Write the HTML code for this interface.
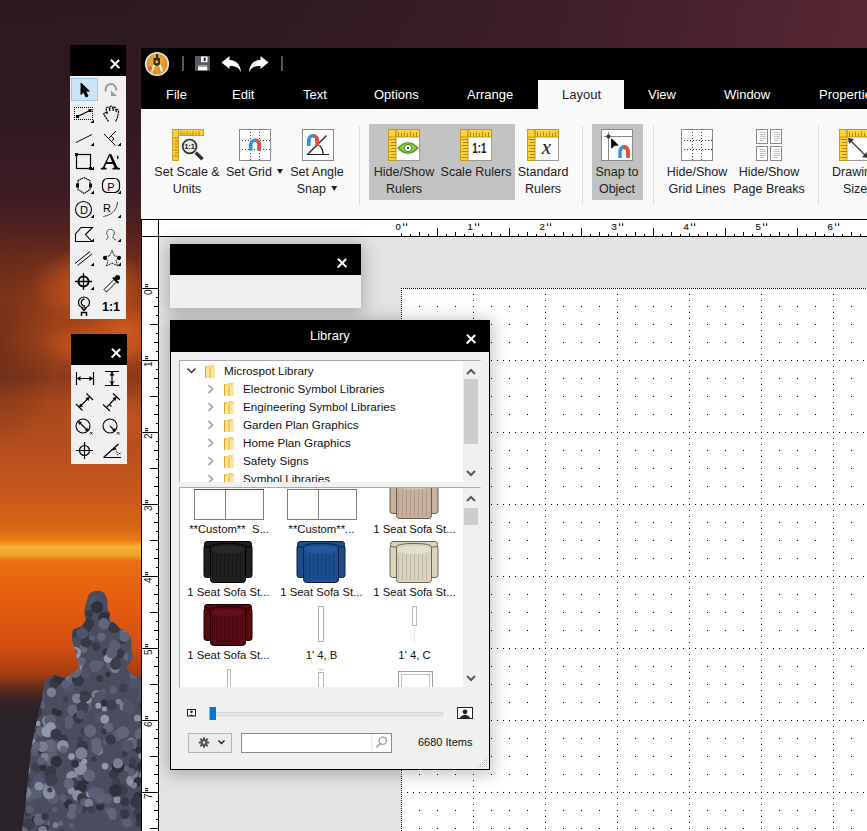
<!DOCTYPE html>
<html><head><meta charset="utf-8">
<style>
*{margin:0;padding:0;box-sizing:border-box}
html,body{width:867px;height:831px;overflow:hidden}
body{position:relative;font-family:"Liberation Sans",sans-serif;background:#2a1a22}
.a{position:absolute}
#sky{left:0;top:0;width:867px;height:831px;
background:linear-gradient(180deg,#2b1921 0px,#331b24 120px,#3f1d22 220px,#5a2418 290px,#8a3414 320px,#b84a18 345px,#8a3618 380px,#b04a1c 420px,#bf5620 470px,#c85a1c 505px,#e0640e 532px,#f2a426 545px,#ee7410 556px,#e85a0c 590px,#d24e0e 630px,#9a3610 670px,#5a2414 700px,#2e2024 730px,#2a2228 831px)}
.pal{background:#f0f0f0}
.hd{background:#000}
.x{position:absolute;width:10px;height:10px}
.x:before,.x:after{content:"";position:absolute;left:-0.5px;top:4.3px;width:12.4px;height:2.4px;background:#fff}
.x:before{transform:rotate(45deg)}.x:after{transform:rotate(-45deg)}
.menu{color:#fff;font-size:13px;top:86px;line-height:17px}
.rb{font-size:12.5px;color:#222;line-height:17px;text-align:center;white-space:nowrap}
.tr{font-size:11.7px;color:#111;line-height:14px;white-space:nowrap}
.it{font-size:11.3px;color:#111;line-height:14px;text-align:center;white-space:nowrap}
.sep{background:#dcdcdc;width:1px}
</style></head><body>
<svg class="a" style="left:0;top:0" width="867" height="831" viewBox="0 0 867 831">
 <defs>
  <linearGradient id="skyg" x1="0" y1="0" x2="0" y2="1">
   <stop offset="0" stop-color="#2c1920"/>
   <stop offset="0.15" stop-color="#321a22"/>
   <stop offset="0.24" stop-color="#3e1c24"/>
   <stop offset="0.28" stop-color="#56221f"/>
   <stop offset="0.32" stop-color="#74301a"/>
   <stop offset="0.36" stop-color="#983e18"/>
   <stop offset="0.41" stop-color="#a84618"/>
   <stop offset="0.455" stop-color="#8c3a1c"/>
   <stop offset="0.48" stop-color="#a4461c"/>
   <stop offset="0.54" stop-color="#b64e1e"/>
   <stop offset="0.60" stop-color="#ca5a1c"/>
   <stop offset="0.635" stop-color="#d86616"/>
   <stop offset="0.650" stop-color="#ec7a12"/>
   <stop offset="0.658" stop-color="#f4b232"/>
   <stop offset="0.668" stop-color="#eea228"/>
   <stop offset="0.675" stop-color="#ea7012"/>
   <stop offset="0.72" stop-color="#e65e10"/>
   <stop offset="0.78" stop-color="#d04e10"/>
   <stop offset="0.815" stop-color="#a03a12"/>
   <stop offset="0.835" stop-color="#6a2a16"/>
   <stop offset="0.86" stop-color="#30222a"/>
   <stop offset="1" stop-color="#28222a"/>
  </linearGradient>
  <linearGradient id="topg" x1="0" y1="0" x2="1" y2="0">
   <stop offset="0" stop-color="#2a1820" stop-opacity="0"/>
   <stop offset="1" stop-color="#6a2c3c" stop-opacity="0.7"/>
  </linearGradient>
  <radialGradient id="glow1" cx="0.5" cy="0.5" r="0.5"><stop offset="0" stop-color="#d45a20" stop-opacity="0.9"/><stop offset="1" stop-color="#d05a22" stop-opacity="0"/></radialGradient>
  <radialGradient id="snow" cx="0.4" cy="0.35" r="0.6"><stop offset="0" stop-color="#646878"/><stop offset="1" stop-color="#3e4050"/></radialGradient>
 </defs>
 <rect width="867" height="831" fill="url(#skyg)"/>
 <rect width="867" height="60" fill="url(#topg)"/>
 <linearGradient id="leftdark" x1="0" y1="0" x2="1" y2="0"><stop offset="0" stop-color="#2a1418" stop-opacity="0.45"/><stop offset="0.5" stop-color="#2a1418" stop-opacity="0"/></linearGradient>
 <radialGradient id="ld2" cx="0.5" cy="0.5" r="0.5"><stop offset="0" stop-color="#2a1418" stop-opacity="0.4"/><stop offset="1" stop-color="#2a1418" stop-opacity="0"/></radialGradient>
 <ellipse cx="0" cy="340" rx="60" ry="110" fill="url(#ld2)"/>
 <ellipse cx="90" cy="285" rx="60" ry="38" fill="url(#glow1)"/><ellipse cx="125" cy="330" rx="40" ry="30" fill="url(#glow1)"/>
 <ellipse cx="110" cy="420" rx="50" ry="30" fill="url(#glow1)"/>
 <ellipse cx="100" cy="345" rx="60" ry="25" fill="url(#glow1)"/>
 <linearGradient id="forg" x1="0" y1="0" x2="0" y2="1"><stop offset="0" stop-color="#2a2229" stop-opacity="0"/><stop offset="0.25" stop-color="#2a2229" stop-opacity="1"/></linearGradient><rect x="0" y="675" width="141" height="156" fill="url(#forg)"/>
 <clipPath id="treeclip"><path d="M96 591 Q103 590 106 596 L108 602 Q106 608 110 613 L109 620 Q116 623 119 628 L128 632 Q133 640 131 648 L133 656 Q130 664 126 668 L132 674 L141 678 L141 831 L22 831 L26 800 L31 750 L37 720 L42 700 L44 684 Q46 676 54 675 L64 678 L72 674 L80 668 L77 660 L75 650 L72 640 L73 630 L82 626 L86 620 L84 612 L86 604 L88 596 Q91 591 96 591z"/></clipPath>
 <path d="M96 591 Q103 590 106 596 L108 602 Q106 608 110 613 L109 620 Q116 623 119 628 L128 632 Q133 640 131 648 L133 656 Q130 664 126 668 L132 674 L141 678 L141 831 L22 831 L26 800 L31 750 L37 720 L42 700 L44 684 Q46 676 54 675 L64 678 L72 674 L80 668 L77 660 L75 650 L72 640 L73 630 L82 626 L86 620 L84 612 L86 604 L88 596 Q91 591 96 591z" fill="#4a4d5e"/>
 <g clip-path="url(#treeclip)"><circle cx="59.1" cy="625.3" r="5.1" fill="#3c3e4c"/><circle cx="30.0" cy="731.9" r="6.1" fill="#2e303c"/><circle cx="73.1" cy="605.3" r="2.9" fill="#62667a"/><circle cx="33.7" cy="643.1" r="5.0" fill="#9498ac"/><circle cx="92.4" cy="600.2" r="3.4" fill="#50536a"/><circle cx="54.8" cy="623.6" r="3.0" fill="#3c3e4c"/><circle cx="41.0" cy="731.7" r="5.1" fill="#62667a"/><circle cx="108.4" cy="727.4" r="5.0" fill="#62667a"/><circle cx="72.3" cy="665.6" r="4.8" fill="#5a5e72"/><circle cx="49.6" cy="632.4" r="5.6" fill="#363845"/><circle cx="84.7" cy="804.2" r="5.4" fill="#2e303c"/><circle cx="33.0" cy="691.3" r="5.5" fill="#363845"/><circle cx="71.6" cy="825.6" r="2.8" fill="#5a5e72"/><circle cx="61.2" cy="674.5" r="4.5" fill="#7a7e92"/><circle cx="124.7" cy="821.3" r="4.4" fill="#50536a"/><circle cx="110.9" cy="664.5" r="4.8" fill="#5a5e72"/><circle cx="54.1" cy="683.3" r="5.2" fill="#363845"/><circle cx="63.1" cy="738.9" r="4.5" fill="#363845"/><circle cx="34.4" cy="649.2" r="4.1" fill="#7a7e92"/><circle cx="39.1" cy="687.2" r="3.6" fill="#363845"/><circle cx="127.7" cy="656.8" r="4.2" fill="#5a5e72"/><circle cx="139.6" cy="625.3" r="3.2" fill="#2e303c"/><circle cx="19.5" cy="793.3" r="3.2" fill="#2e303c"/><circle cx="71.2" cy="679.2" r="4.8" fill="#9498ac"/><circle cx="127.1" cy="822.7" r="5.1" fill="#5a5e72"/><circle cx="132.2" cy="780.7" r="6.0" fill="#8a8ea2"/><circle cx="68.6" cy="685.3" r="4.4" fill="#50536a"/><circle cx="26.6" cy="639.6" r="3.1" fill="#2e303c"/><circle cx="31.0" cy="728.0" r="4.6" fill="#9498ac"/><circle cx="21.2" cy="804.0" r="5.0" fill="#363845"/><circle cx="139.3" cy="736.8" r="4.4" fill="#363845"/><circle cx="144.1" cy="703.1" r="4.4" fill="#2e303c"/><circle cx="113.2" cy="770.9" r="4.4" fill="#62667a"/><circle cx="20.9" cy="822.9" r="4.6" fill="#3c3e4c"/><circle cx="134.1" cy="775.3" r="3.7" fill="#50536a"/><circle cx="106.4" cy="652.5" r="4.0" fill="#2e303c"/><circle cx="85.6" cy="780.4" r="3.8" fill="#2e303c"/><circle cx="120.4" cy="790.1" r="5.5" fill="#3c3e4c"/><circle cx="80.6" cy="768.6" r="6.5" fill="#8a8ea2"/><circle cx="50.9" cy="759.1" r="6.3" fill="#62667a"/><circle cx="143.5" cy="823.9" r="4.0" fill="#2e303c"/><circle cx="77.7" cy="671.4" r="4.4" fill="#9498ac"/><circle cx="124.7" cy="706.4" r="5.1" fill="#7a7e92"/><circle cx="124.0" cy="617.6" r="4.1" fill="#50536a"/><circle cx="78.7" cy="632.1" r="5.7" fill="#3c3e4c"/><circle cx="68.3" cy="687.1" r="6.3" fill="#50536a"/><circle cx="144.1" cy="594.8" r="4.9" fill="#62667a"/><circle cx="36.6" cy="792.1" r="6.4" fill="#5a5e72"/><circle cx="37.8" cy="723.4" r="2.6" fill="#9498ac"/><circle cx="100.5" cy="718.1" r="6.2" fill="#50536a"/><circle cx="122.9" cy="640.1" r="3.5" fill="#2e303c"/><circle cx="115.0" cy="668.5" r="4.7" fill="#7a7e92"/><circle cx="133.6" cy="675.4" r="4.3" fill="#62667a"/><circle cx="71.4" cy="814.7" r="4.5" fill="#62667a"/><circle cx="82.8" cy="803.6" r="5.6" fill="#50536a"/><circle cx="39.9" cy="705.0" r="5.4" fill="#5a5e72"/><circle cx="104.7" cy="719.1" r="4.4" fill="#9498ac"/><circle cx="25.2" cy="635.3" r="2.7" fill="#363845"/><circle cx="89.3" cy="775.7" r="6.1" fill="#62667a"/><circle cx="141.6" cy="737.7" r="3.3" fill="#3c3e4c"/><circle cx="85.7" cy="706.1" r="6.3" fill="#5a5e72"/><circle cx="135.2" cy="808.5" r="3.3" fill="#5a5e72"/><circle cx="33.4" cy="697.2" r="2.8" fill="#2e303c"/><circle cx="45.0" cy="662.8" r="3.0" fill="#9498ac"/><circle cx="99.7" cy="678.4" r="3.5" fill="#363845"/><circle cx="45.9" cy="823.3" r="4.1" fill="#62667a"/><circle cx="123.7" cy="627.9" r="4.2" fill="#5a5e72"/><circle cx="71.5" cy="676.1" r="2.9" fill="#5a5e72"/><circle cx="88.4" cy="696.8" r="2.6" fill="#3c3e4c"/><circle cx="55.5" cy="825.3" r="3.0" fill="#7a7e92"/><circle cx="141.4" cy="613.9" r="3.6" fill="#2e303c"/><circle cx="52.3" cy="620.0" r="4.2" fill="#8a8ea2"/><circle cx="69.6" cy="720.5" r="4.6" fill="#5a5e72"/><circle cx="29.4" cy="602.2" r="5.3" fill="#50536a"/><circle cx="52.2" cy="592.2" r="2.9" fill="#3c3e4c"/><circle cx="126.7" cy="604.5" r="6.0" fill="#5a5e72"/><circle cx="144.3" cy="691.2" r="6.2" fill="#50536a"/><circle cx="84.9" cy="646.9" r="2.9" fill="#2e303c"/><circle cx="41.0" cy="818.3" r="5.0" fill="#50536a"/><circle cx="54.8" cy="711.5" r="3.2" fill="#2e303c"/><circle cx="144.3" cy="597.1" r="2.6" fill="#50536a"/><circle cx="83.3" cy="648.7" r="4.3" fill="#62667a"/><circle cx="72.9" cy="710.3" r="5.8" fill="#62667a"/><circle cx="57.1" cy="641.1" r="3.4" fill="#3c3e4c"/><circle cx="110.6" cy="622.5" r="6.5" fill="#7a7e92"/><circle cx="19.8" cy="742.5" r="6.0" fill="#50536a"/><circle cx="28.7" cy="795.8" r="6.0" fill="#5a5e72"/><circle cx="94.0" cy="759.1" r="2.7" fill="#363845"/><circle cx="74.6" cy="653.0" r="6.3" fill="#9498ac"/><circle cx="59.1" cy="596.5" r="6.0" fill="#2e303c"/><circle cx="18.1" cy="682.3" r="4.4" fill="#50536a"/><circle cx="49.5" cy="779.7" r="2.9" fill="#7a7e92"/><circle cx="68.7" cy="598.3" r="2.6" fill="#2e303c"/><circle cx="28.7" cy="824.5" r="5.9" fill="#3c3e4c"/><circle cx="117.6" cy="735.4" r="5.6" fill="#5a5e72"/><circle cx="37.0" cy="766.9" r="5.1" fill="#3c3e4c"/><circle cx="131.3" cy="743.0" r="5.4" fill="#7a7e92"/><circle cx="133.6" cy="774.0" r="4.8" fill="#7a7e92"/><circle cx="123.0" cy="732.3" r="6.1" fill="#62667a"/><circle cx="99.6" cy="609.0" r="2.7" fill="#50536a"/><circle cx="65.8" cy="699.5" r="2.7" fill="#3c3e4c"/><circle cx="104.4" cy="708.9" r="2.5" fill="#9498ac"/><circle cx="136.4" cy="809.8" r="2.9" fill="#62667a"/><circle cx="111.6" cy="650.3" r="2.8" fill="#3c3e4c"/><circle cx="114.1" cy="645.0" r="5.1" fill="#5a5e72"/><circle cx="27.7" cy="812.9" r="3.6" fill="#3c3e4c"/><circle cx="99.6" cy="607.1" r="3.1" fill="#3c3e4c"/><circle cx="106.0" cy="741.4" r="3.0" fill="#5a5e72"/><circle cx="52.1" cy="754.0" r="5.3" fill="#5a5e72"/><circle cx="108.0" cy="658.5" r="4.4" fill="#9498ac"/><circle cx="43.3" cy="829.6" r="6.2" fill="#363845"/><circle cx="27.7" cy="713.1" r="6.5" fill="#8a8ea2"/><circle cx="44.6" cy="821.6" r="3.3" fill="#50536a"/><circle cx="112.9" cy="652.7" r="3.9" fill="#62667a"/><circle cx="82.6" cy="807.1" r="5.3" fill="#363845"/><circle cx="68.0" cy="627.3" r="6.3" fill="#5a5e72"/><circle cx="56.3" cy="622.8" r="3.9" fill="#363845"/><circle cx="18.2" cy="773.4" r="5.9" fill="#2e303c"/><circle cx="108.6" cy="810.7" r="3.7" fill="#5a5e72"/><circle cx="67.6" cy="802.9" r="2.8" fill="#8a8ea2"/><circle cx="126.5" cy="657.3" r="2.7" fill="#62667a"/><circle cx="136.8" cy="649.6" r="3.6" fill="#50536a"/><circle cx="116.2" cy="781.9" r="4.2" fill="#3c3e4c"/><circle cx="68.8" cy="804.3" r="4.7" fill="#2e303c"/><circle cx="24.3" cy="768.9" r="4.3" fill="#9498ac"/><circle cx="128.4" cy="707.9" r="6.1" fill="#50536a"/><circle cx="78.0" cy="672.9" r="3.7" fill="#62667a"/><circle cx="51.0" cy="750.0" r="3.7" fill="#5a5e72"/><circle cx="33.2" cy="746.9" r="2.8" fill="#5a5e72"/><circle cx="87.9" cy="699.9" r="3.8" fill="#8a8ea2"/><circle cx="35.7" cy="635.5" r="2.9" fill="#2e303c"/><circle cx="58.5" cy="679.0" r="5.7" fill="#2e303c"/><circle cx="113.2" cy="690.0" r="4.2" fill="#5a5e72"/><circle cx="52.3" cy="773.8" r="4.5" fill="#5a5e72"/><circle cx="34.0" cy="712.3" r="5.0" fill="#7a7e92"/><circle cx="29.8" cy="809.5" r="4.0" fill="#5a5e72"/><circle cx="139.2" cy="797.6" r="6.0" fill="#2e303c"/><circle cx="72.0" cy="776.6" r="5.7" fill="#8a8ea2"/><circle cx="18.0" cy="684.7" r="6.2" fill="#8a8ea2"/><circle cx="141.5" cy="649.4" r="2.9" fill="#3c3e4c"/><circle cx="141.4" cy="614.9" r="5.8" fill="#5a5e72"/><circle cx="28.8" cy="779.9" r="2.5" fill="#3c3e4c"/><circle cx="134.8" cy="747.4" r="3.7" fill="#363845"/><circle cx="85.1" cy="696.0" r="5.6" fill="#363845"/><circle cx="84.6" cy="732.0" r="4.1" fill="#3c3e4c"/><circle cx="18.1" cy="720.8" r="6.5" fill="#363845"/><circle cx="99.9" cy="806.3" r="4.4" fill="#2e303c"/><circle cx="21.7" cy="689.7" r="5.1" fill="#2e303c"/><circle cx="81.3" cy="754.6" r="4.2" fill="#3c3e4c"/><circle cx="71.9" cy="679.4" r="4.5" fill="#62667a"/><circle cx="71.4" cy="756.6" r="3.3" fill="#9498ac"/><circle cx="125.3" cy="604.7" r="4.5" fill="#2e303c"/><circle cx="47.3" cy="642.7" r="5.5" fill="#3c3e4c"/><circle cx="81.0" cy="634.3" r="3.4" fill="#62667a"/><circle cx="25.2" cy="734.9" r="6.2" fill="#2e303c"/><circle cx="141.7" cy="623.1" r="2.7" fill="#363845"/><circle cx="75.1" cy="763.9" r="3.8" fill="#2e303c"/><circle cx="136.3" cy="669.3" r="3.2" fill="#9498ac"/><circle cx="77.4" cy="665.0" r="5.4" fill="#8a8ea2"/><circle cx="74.2" cy="614.9" r="2.8" fill="#363845"/><circle cx="139.4" cy="618.6" r="6.4" fill="#363845"/><circle cx="115.6" cy="664.2" r="5.7" fill="#3c3e4c"/><circle cx="78.1" cy="680.1" r="6.2" fill="#363845"/><circle cx="111.6" cy="705.2" r="5.0" fill="#3c3e4c"/><circle cx="115.4" cy="598.0" r="2.6" fill="#2e303c"/><circle cx="50.6" cy="772.6" r="6.1" fill="#363845"/><circle cx="60.5" cy="823.6" r="2.7" fill="#62667a"/><circle cx="58.2" cy="656.1" r="2.5" fill="#9498ac"/><circle cx="138.2" cy="604.1" r="5.8" fill="#3c3e4c"/><circle cx="139.5" cy="823.6" r="4.0" fill="#363845"/><circle cx="121.5" cy="620.8" r="4.5" fill="#3c3e4c"/><circle cx="56.5" cy="759.0" r="3.1" fill="#363845"/><circle cx="76.5" cy="781.6" r="4.9" fill="#5a5e72"/><circle cx="113.6" cy="649.1" r="2.8" fill="#3c3e4c"/><circle cx="87.2" cy="627.7" r="4.2" fill="#2e303c"/><circle cx="51.6" cy="608.8" r="2.9" fill="#62667a"/><circle cx="141.5" cy="630.8" r="3.0" fill="#62667a"/><circle cx="47.8" cy="721.0" r="5.6" fill="#8a8ea2"/><circle cx="55.3" cy="728.0" r="4.0" fill="#50536a"/><circle cx="73.8" cy="633.9" r="3.4" fill="#3c3e4c"/><circle cx="41.9" cy="604.0" r="3.5" fill="#3c3e4c"/><circle cx="47.4" cy="787.7" r="5.1" fill="#7a7e92"/><circle cx="18.6" cy="806.1" r="3.4" fill="#5a5e72"/><circle cx="23.1" cy="660.5" r="3.0" fill="#3c3e4c"/><circle cx="42.7" cy="606.6" r="4.6" fill="#3c3e4c"/><circle cx="51.0" cy="780.1" r="6.3" fill="#3c3e4c"/><circle cx="108.1" cy="674.4" r="2.6" fill="#2e303c"/><circle cx="43.9" cy="651.0" r="4.9" fill="#50536a"/><circle cx="121.5" cy="790.3" r="4.1" fill="#62667a"/><circle cx="57.6" cy="638.2" r="5.7" fill="#50536a"/><circle cx="69.8" cy="784.6" r="5.2" fill="#3c3e4c"/><circle cx="29.6" cy="628.4" r="5.3" fill="#5a5e72"/><circle cx="102.8" cy="691.2" r="2.7" fill="#5a5e72"/><circle cx="70.6" cy="592.5" r="5.6" fill="#9498ac"/><circle cx="43.0" cy="767.8" r="3.3" fill="#2e303c"/><circle cx="71.8" cy="790.6" r="4.1" fill="#8a8ea2"/><circle cx="116.2" cy="620.1" r="2.7" fill="#363845"/><circle cx="29.3" cy="741.7" r="4.0" fill="#50536a"/><circle cx="62.2" cy="628.0" r="3.2" fill="#363845"/><circle cx="80.3" cy="786.8" r="6.4" fill="#2e303c"/><circle cx="124.3" cy="598.7" r="6.2" fill="#3c3e4c"/><circle cx="135.6" cy="683.8" r="6.1" fill="#50536a"/><circle cx="99.3" cy="799.6" r="5.0" fill="#50536a"/><circle cx="123.3" cy="633.2" r="3.4" fill="#62667a"/><circle cx="37.9" cy="676.7" r="3.1" fill="#7a7e92"/><circle cx="23.2" cy="726.9" r="5.5" fill="#363845"/><circle cx="33.0" cy="736.1" r="4.7" fill="#5a5e72"/><circle cx="100.4" cy="664.1" r="3.5" fill="#5a5e72"/><circle cx="74.7" cy="696.3" r="2.6" fill="#5a5e72"/><circle cx="77.1" cy="698.4" r="5.0" fill="#7a7e92"/><circle cx="120.9" cy="686.9" r="2.8" fill="#5a5e72"/><circle cx="29.6" cy="697.2" r="4.5" fill="#3c3e4c"/><circle cx="34.5" cy="815.8" r="3.8" fill="#50536a"/><circle cx="24.9" cy="712.5" r="4.0" fill="#7a7e92"/><circle cx="21.3" cy="604.4" r="5.0" fill="#50536a"/><circle cx="42.6" cy="830.5" r="4.5" fill="#7a7e92"/><circle cx="105.1" cy="766.1" r="3.4" fill="#9498ac"/><circle cx="114.0" cy="627.2" r="6.1" fill="#363845"/><circle cx="36.2" cy="712.0" r="6.2" fill="#363845"/><circle cx="96.2" cy="646.6" r="4.0" fill="#363845"/><circle cx="38.5" cy="819.3" r="5.2" fill="#7a7e92"/><circle cx="118.6" cy="653.3" r="5.6" fill="#363845"/><circle cx="140.7" cy="699.9" r="4.6" fill="#50536a"/><circle cx="50.0" cy="720.3" r="5.9" fill="#5a5e72"/><circle cx="51.6" cy="832.7" r="4.8" fill="#50536a"/><circle cx="74.2" cy="631.7" r="5.5" fill="#3c3e4c"/><circle cx="50.2" cy="745.9" r="6.4" fill="#62667a"/><circle cx="131.8" cy="769.1" r="5.5" fill="#363845"/><circle cx="96.2" cy="694.8" r="4.6" fill="#7a7e92"/><circle cx="80.0" cy="739.3" r="2.7" fill="#3c3e4c"/><circle cx="63.1" cy="614.3" r="3.9" fill="#3c3e4c"/><circle cx="56.2" cy="621.0" r="4.0" fill="#7a7e92"/><circle cx="35.1" cy="819.3" r="3.5" fill="#2e303c"/><circle cx="26.1" cy="623.7" r="5.2" fill="#363845"/><circle cx="140.8" cy="601.9" r="5.8" fill="#9498ac"/><circle cx="100.0" cy="697.6" r="6.2" fill="#50536a"/><circle cx="39.0" cy="588.1" r="2.7" fill="#2e303c"/><circle cx="48.2" cy="602.4" r="5.6" fill="#3c3e4c"/><circle cx="101.4" cy="636.7" r="4.2" fill="#62667a"/><circle cx="82.4" cy="746.5" r="5.8" fill="#363845"/><circle cx="26.1" cy="742.6" r="6.5" fill="#5a5e72"/><circle cx="108.9" cy="589.6" r="5.9" fill="#5a5e72"/><circle cx="28.2" cy="749.9" r="3.2" fill="#8a8ea2"/><circle cx="47.5" cy="597.6" r="3.8" fill="#62667a"/><circle cx="137.7" cy="653.0" r="2.7" fill="#62667a"/><circle cx="73.4" cy="782.7" r="4.6" fill="#3c3e4c"/><circle cx="135.9" cy="808.9" r="2.8" fill="#50536a"/><circle cx="51.1" cy="646.3" r="5.5" fill="#9498ac"/><circle cx="134.2" cy="635.4" r="4.1" fill="#5a5e72"/><circle cx="133.3" cy="743.8" r="5.3" fill="#62667a"/><circle cx="77.6" cy="795.4" r="5.3" fill="#8a8ea2"/><circle cx="139.4" cy="645.8" r="6.0" fill="#8a8ea2"/><circle cx="97.1" cy="607.2" r="6.1" fill="#2e303c"/><circle cx="32.2" cy="741.6" r="3.1" fill="#9498ac"/><circle cx="21.6" cy="598.3" r="5.3" fill="#62667a"/><circle cx="26.6" cy="599.5" r="5.9" fill="#7a7e92"/><circle cx="121.8" cy="790.4" r="6.1" fill="#3c3e4c"/><circle cx="137.9" cy="614.5" r="3.3" fill="#2e303c"/><circle cx="138.6" cy="813.0" r="5.5" fill="#3c3e4c"/><circle cx="98.3" cy="705.8" r="3.0" fill="#9498ac"/><circle cx="44.0" cy="666.8" r="4.2" fill="#363845"/><circle cx="136.1" cy="600.0" r="5.5" fill="#9498ac"/><circle cx="82.0" cy="798.3" r="5.0" fill="#363845"/><circle cx="22.0" cy="716.1" r="2.9" fill="#50536a"/><circle cx="86.3" cy="641.5" r="5.9" fill="#363845"/><circle cx="39.6" cy="588.3" r="3.3" fill="#7a7e92"/><circle cx="18.6" cy="709.2" r="4.5" fill="#7a7e92"/><circle cx="140.8" cy="734.4" r="6.3" fill="#62667a"/><circle cx="137.9" cy="658.1" r="3.4" fill="#5a5e72"/><circle cx="39.1" cy="819.9" r="5.6" fill="#62667a"/><circle cx="89.3" cy="613.8" r="3.8" fill="#363845"/><circle cx="131.3" cy="772.1" r="4.2" fill="#5a5e72"/><circle cx="44.2" cy="653.0" r="6.1" fill="#5a5e72"/><circle cx="142.8" cy="743.8" r="6.3" fill="#3c3e4c"/><circle cx="113.8" cy="774.0" r="5.1" fill="#363845"/><circle cx="84.3" cy="802.4" r="4.3" fill="#5a5e72"/><circle cx="39.5" cy="696.4" r="5.6" fill="#50536a"/><circle cx="60.4" cy="746.7" r="5.3" fill="#5a5e72"/><circle cx="56.3" cy="761.7" r="5.9" fill="#2e303c"/><circle cx="141.8" cy="766.6" r="4.9" fill="#2e303c"/><circle cx="59.7" cy="634.8" r="6.4" fill="#50536a"/><circle cx="38.9" cy="750.5" r="3.3" fill="#2e303c"/><circle cx="119.0" cy="769.1" r="4.2" fill="#3c3e4c"/><circle cx="133.7" cy="657.4" r="6.0" fill="#50536a"/><circle cx="68.7" cy="783.4" r="5.3" fill="#62667a"/><circle cx="55.6" cy="593.5" r="3.5" fill="#50536a"/><circle cx="112.1" cy="812.3" r="4.2" fill="#62667a"/><circle cx="100.2" cy="797.0" r="5.2" fill="#62667a"/><circle cx="106.9" cy="798.6" r="5.2" fill="#5a5e72"/><circle cx="72.9" cy="652.2" r="5.3" fill="#7a7e92"/><circle cx="117.4" cy="764.1" r="5.0" fill="#363845"/><circle cx="79.3" cy="592.9" r="5.9" fill="#62667a"/><circle cx="136.1" cy="633.2" r="5.1" fill="#8a8ea2"/><circle cx="123.6" cy="812.3" r="2.9" fill="#2e303c"/><circle cx="38.4" cy="781.1" r="6.3" fill="#50536a"/><circle cx="125.6" cy="700.8" r="3.3" fill="#50536a"/><circle cx="99.2" cy="792.8" r="4.6" fill="#5a5e72"/><circle cx="44.7" cy="757.0" r="4.1" fill="#7a7e92"/><circle cx="110.6" cy="739.7" r="5.1" fill="#363845"/><circle cx="68.8" cy="591.3" r="4.2" fill="#62667a"/><circle cx="103.7" cy="731.3" r="2.9" fill="#363845"/><circle cx="137.4" cy="718.2" r="3.4" fill="#8a8ea2"/><circle cx="76.7" cy="628.6" r="6.2" fill="#3c3e4c"/><circle cx="42.5" cy="746.6" r="5.4" fill="#7a7e92"/><circle cx="62.8" cy="745.8" r="5.8" fill="#8a8ea2"/><circle cx="144.5" cy="775.7" r="5.1" fill="#8a8ea2"/><circle cx="63.1" cy="798.1" r="3.6" fill="#5a5e72"/><circle cx="142.8" cy="755.7" r="4.4" fill="#8a8ea2"/><circle cx="63.5" cy="749.6" r="3.8" fill="#62667a"/><circle cx="98.9" cy="750.8" r="3.9" fill="#8a8ea2"/><circle cx="25.2" cy="792.5" r="6.1" fill="#7a7e92"/><circle cx="85.4" cy="673.3" r="4.8" fill="#50536a"/><circle cx="138.9" cy="750.0" r="3.5" fill="#2e303c"/><circle cx="126.5" cy="633.9" r="4.3" fill="#7a7e92"/><circle cx="132.8" cy="783.5" r="3.2" fill="#9498ac"/><circle cx="142.1" cy="610.3" r="6.1" fill="#62667a"/><circle cx="124.5" cy="636.8" r="5.3" fill="#62667a"/><circle cx="124.6" cy="753.8" r="3.0" fill="#363845"/><circle cx="47.7" cy="622.4" r="4.5" fill="#363845"/><circle cx="133.0" cy="761.0" r="3.5" fill="#3c3e4c"/><circle cx="127.6" cy="589.6" r="5.9" fill="#62667a"/><circle cx="81.2" cy="661.3" r="4.4" fill="#62667a"/><circle cx="27.6" cy="745.3" r="5.0" fill="#3c3e4c"/><circle cx="23.8" cy="769.9" r="6.5" fill="#7a7e92"/><circle cx="82.8" cy="707.7" r="6.1" fill="#3c3e4c"/><circle cx="70.8" cy="619.3" r="2.9" fill="#5a5e72"/><circle cx="78.3" cy="717.8" r="5.6" fill="#363845"/><circle cx="61.4" cy="650.1" r="2.7" fill="#363845"/><circle cx="123.1" cy="687.7" r="4.5" fill="#3c3e4c"/><circle cx="61.8" cy="638.3" r="4.5" fill="#2e303c"/><circle cx="58.3" cy="661.9" r="4.8" fill="#50536a"/><circle cx="68.7" cy="724.9" r="4.1" fill="#5a5e72"/><circle cx="56.2" cy="589.5" r="3.3" fill="#9498ac"/><circle cx="115.3" cy="602.9" r="4.5" fill="#5a5e72"/><circle cx="96.3" cy="742.8" r="5.3" fill="#62667a"/><circle cx="28.5" cy="597.8" r="5.0" fill="#50536a"/><circle cx="30.9" cy="632.8" r="2.6" fill="#9498ac"/><circle cx="19.7" cy="803.4" r="3.1" fill="#3c3e4c"/><circle cx="50.8" cy="662.6" r="4.2" fill="#363845"/><circle cx="89.9" cy="730.8" r="6.2" fill="#62667a"/><circle cx="23.0" cy="617.4" r="5.7" fill="#5a5e72"/><circle cx="74.7" cy="591.5" r="4.0" fill="#62667a"/><circle cx="142.6" cy="705.4" r="4.1" fill="#3c3e4c"/><circle cx="78.0" cy="809.3" r="5.0" fill="#50536a"/><circle cx="104.8" cy="618.1" r="6.4" fill="#2e303c"/><circle cx="34.4" cy="592.4" r="5.4" fill="#3c3e4c"/><circle cx="112.5" cy="815.9" r="4.0" fill="#62667a"/><circle cx="126.6" cy="768.2" r="2.8" fill="#62667a"/><circle cx="81.3" cy="753.4" r="6.1" fill="#7a7e92"/><circle cx="109.1" cy="590.8" r="2.6" fill="#62667a"/><circle cx="28.1" cy="664.8" r="5.4" fill="#363845"/><circle cx="95.3" cy="666.1" r="6.3" fill="#5a5e72"/><circle cx="104.0" cy="623.8" r="5.7" fill="#62667a"/><circle cx="38.8" cy="786.1" r="4.4" fill="#8a8ea2"/><circle cx="138.0" cy="781.8" r="4.8" fill="#2e303c"/><circle cx="97.0" cy="748.8" r="5.7" fill="#62667a"/><circle cx="110.2" cy="591.8" r="3.1" fill="#9498ac"/><circle cx="72.4" cy="807.4" r="4.0" fill="#62667a"/><circle cx="116.0" cy="645.9" r="4.3" fill="#5a5e72"/><circle cx="51.4" cy="692.4" r="4.8" fill="#7a7e92"/><circle cx="54.6" cy="622.7" r="6.1" fill="#7a7e92"/><circle cx="52.8" cy="798.2" r="5.7" fill="#5a5e72"/><circle cx="62.1" cy="609.0" r="4.7" fill="#7a7e92"/><circle cx="118.0" cy="766.4" r="6.4" fill="#2e303c"/><circle cx="104.1" cy="702.9" r="3.3" fill="#2e303c"/><circle cx="118.5" cy="701.6" r="2.9" fill="#7a7e92"/><circle cx="47.6" cy="731.2" r="6.1" fill="#9498ac"/><circle cx="58.8" cy="713.0" r="3.3" fill="#2e303c"/><circle cx="40.9" cy="761.2" r="4.0" fill="#5a5e72"/><circle cx="117.0" cy="799.7" r="3.5" fill="#8a8ea2"/><circle cx="65.5" cy="614.2" r="5.0" fill="#7a7e92"/><circle cx="58.1" cy="595.5" r="3.6" fill="#50536a"/><circle cx="22.3" cy="832.6" r="6.0" fill="#62667a"/><circle cx="45.1" cy="816.6" r="3.6" fill="#363845"/><circle cx="115.4" cy="790.3" r="6.4" fill="#2e303c"/><circle cx="61.0" cy="833.7" r="4.0" fill="#2e303c"/><circle cx="88.8" cy="803.1" r="4.3" fill="#7a7e92"/><circle cx="127.6" cy="746.0" r="6.2" fill="#50536a"/><circle cx="50.7" cy="727.4" r="5.1" fill="#9498ac"/><circle cx="82.3" cy="633.1" r="5.9" fill="#50536a"/><circle cx="143.9" cy="642.8" r="2.7" fill="#363845"/><circle cx="25.5" cy="724.6" r="2.6" fill="#8a8ea2"/><circle cx="117.9" cy="763.3" r="5.1" fill="#7a7e92"/><circle cx="30.8" cy="666.5" r="2.5" fill="#3c3e4c"/><circle cx="55.9" cy="734.1" r="5.5" fill="#363845"/><circle cx="65.2" cy="684.3" r="4.0" fill="#5a5e72"/><circle cx="48.3" cy="623.4" r="5.2" fill="#3c3e4c"/><circle cx="133.9" cy="785.3" r="3.1" fill="#7a7e92"/><circle cx="136.6" cy="802.1" r="6.1" fill="#363845"/><circle cx="139.7" cy="816.7" r="4.0" fill="#2e303c"/><circle cx="75.4" cy="671.9" r="5.8" fill="#62667a"/><circle cx="64.5" cy="670.0" r="5.4" fill="#363845"/><circle cx="88.3" cy="623.7" r="6.0" fill="#363845"/><circle cx="49.3" cy="594.3" r="4.8" fill="#2e303c"/><circle cx="51.1" cy="615.0" r="4.3" fill="#50536a"/><circle cx="142.3" cy="602.0" r="6.1" fill="#50536a"/><circle cx="89.1" cy="794.3" r="3.0" fill="#8a8ea2"/><circle cx="72.9" cy="652.6" r="3.5" fill="#363845"/><circle cx="54.8" cy="809.4" r="2.7" fill="#5a5e72"/><circle cx="36.3" cy="746.0" r="4.3" fill="#62667a"/><circle cx="35.8" cy="588.5" r="5.8" fill="#50536a"/><circle cx="63.7" cy="598.0" r="4.1" fill="#2e303c"/><circle cx="35.5" cy="632.5" r="5.6" fill="#50536a"/><circle cx="94.3" cy="792.8" r="6.1" fill="#5a5e72"/><circle cx="40.3" cy="621.8" r="5.2" fill="#50536a"/><circle cx="92.0" cy="638.0" r="2.8" fill="#5a5e72"/><circle cx="124.8" cy="814.3" r="4.6" fill="#363845"/><circle cx="124.9" cy="801.5" r="4.5" fill="#363845"/><circle cx="34.9" cy="752.4" r="3.5" fill="#5a5e72"/><circle cx="22.7" cy="761.5" r="4.8" fill="#8a8ea2"/><circle cx="84.0" cy="698.1" r="4.6" fill="#3c3e4c"/><circle cx="49.1" cy="793.0" r="6.2" fill="#8a8ea2"/><circle cx="91.2" cy="809.8" r="3.7" fill="#3c3e4c"/><circle cx="80.8" cy="714.8" r="4.6" fill="#50536a"/><circle cx="48.9" cy="609.9" r="5.0" fill="#363845"/><circle cx="49.8" cy="789.8" r="2.6" fill="#3c3e4c"/><circle cx="111.8" cy="652.6" r="5.8" fill="#5a5e72"/><circle cx="84.4" cy="761.6" r="2.9" fill="#9498ac"/><circle cx="40.7" cy="655.4" r="4.4" fill="#5a5e72"/><circle cx="32.0" cy="618.0" r="6.0" fill="#50536a"/></g>
 </svg>

<!-- toolbox palette 1 -->
<div class="a hd" style="left:70px;top:45px;width:56px;height:31px"><div class="x" style="left:39px;top:14px"></div></div>
<div class="a pal" style="left:70px;top:76px;width:56px;height:243px"></div>
<div class="a" style="left:71px;top:78px;width:27px;height:23px;background:#cce4f7;border:1px solid #99c9ef"></div>

<!-- palette 2 -->
<div class="a hd" style="left:71px;top:334px;width:56px;height:31px"><div class="x" style="left:39px;top:14px"></div></div>
<div class="a pal" style="left:71px;top:365px;width:56px;height:99px"></div>


<!-- toolbox icons -->
<svg class="a" style="left:70px;top:76px" width="57" height="390" viewBox="70 76 57 390" fill="none" stroke="#000" stroke-width="1">
 <defs><path id="tri" d="M0 0 h-3.5 l3.5 -3.5z" fill="#000" stroke="none"/></defs>
 <!-- row1 -->
 <path d="M81 83 V94.5 L83.5 92 L86 97 L88 96 L85.6 91.2 L89.3 91z" fill="#000"/>
 <path d="M106 91.5 A5.3 5.3 0 1 1 116 90.5" stroke="#9a9a9a" stroke-width="2"/>
 <path d="M111 90.5 V96 H117z" fill="#9a9a9a" stroke="none"/>
 <!-- row2 -->
 <g fill="#000" stroke="none"><rect x="74" y="107" width="1" height="1"/><rect x="74" y="119" width="1" height="1"/><rect x="76" y="107" width="1" height="1"/><rect x="76" y="119" width="1" height="1"/><rect x="78" y="107" width="1" height="1"/><rect x="78" y="119" width="1" height="1"/><rect x="80" y="107" width="1" height="1"/><rect x="80" y="119" width="1" height="1"/><rect x="82" y="107" width="1" height="1"/><rect x="82" y="119" width="1" height="1"/><rect x="84" y="107" width="1" height="1"/><rect x="84" y="119" width="1" height="1"/><rect x="86" y="107" width="1" height="1"/><rect x="86" y="119" width="1" height="1"/><rect x="88" y="107" width="1" height="1"/><rect x="88" y="119" width="1" height="1"/><rect x="90" y="107" width="1" height="1"/><rect x="90" y="119" width="1" height="1"/><rect x="92" y="107" width="1" height="1"/><rect x="92" y="119" width="1" height="1"/><rect x="74" y="109" width="1" height="1"/><rect x="92" y="109" width="1" height="1"/><rect x="74" y="111" width="1" height="1"/><rect x="92" y="111" width="1" height="1"/><rect x="74" y="113" width="1" height="1"/><rect x="92" y="113" width="1" height="1"/><rect x="74" y="115" width="1" height="1"/><rect x="92" y="115" width="1" height="1"/><rect x="74" y="117" width="1" height="1"/><rect x="92" y="117" width="1" height="1"/></g>
 <path d="M77.5 116.5 L90 110.5" stroke-width="1.2"/>
 <rect x="76" y="115" width="3" height="3" fill="#000" stroke="none"/><rect x="88.5" y="109" width="3" height="3" fill="#000" stroke="none"/>
 <use href="#tri" x="94" y="123"/>
 <path d="M108.5 121.5 L103.5 114 L105.5 112.3 L107.5 113.5 L106 108.5 Q107 106.3 109 107.3 L109.8 111 L109.8 107 Q111.2 105.3 112.7 107 L113.2 111 L113.2 107.5 Q114.7 106.3 115.8 108.3 L116.2 112 L116.6 109.8 Q118.2 109 118.6 111 L117.6 117 L115.5 122" stroke-width="1.2" stroke-dasharray="2.2 0.6"/>
 <!-- row3 -->
 <path d="M76 142.5 L92 134.5"/>
 <use href="#tri" x="94" y="146"/>
 <path d="M104 134 L115.5 145.5 M108.5 138.5 L116 131 M111.5 141.5 L114 139 L111.5 136.3"/>
 <use href="#tri" x="121" y="146"/>
 <!-- row4 -->
 <rect x="76.5" y="154.5" width="14" height="14" stroke-width="1.2"/>
 <rect x="75" y="153" width="3" height="3" fill="#000" stroke="none"/><rect x="89" y="167" width="3" height="3" fill="#000" stroke="none"/>
 <use href="#tri" x="94" y="170"/>
 <path d="M109.2 154 H111.2 L117.5 167.5 L120 168 V169.5 H112.5 V168 L114.5 167.6 L113 164 H106 L104.6 167.6 L106.5 168 V169.5 H100.8 V168 L102.8 167.5z M106.8 162 H112.2 L109.6 156z" fill="#000" stroke="none" fill-rule="evenodd"/>
 <path d="M117 155 L119 157.5 L117 159.5z" fill="#000" stroke="none"/>
 <!-- row5 -->
 <path d="M78 180.5 L84 177.5 L90 180.5 V189.5 L84 193.5 L78 189.5z" stroke-dasharray="1.6 0.5" stroke-width="1.1"/>
 <rect x="76" y="183.5" width="3" height="4" fill="#000" stroke="none"/><rect x="89" y="183.5" width="3" height="4" fill="#000" stroke="none"/>
 <use href="#tri" x="94" y="194"/>
 <rect x="102.5" y="178.5" width="17" height="14" rx="5" stroke-width="1.2"/>
 <text x="111" y="190.5" font-family="Liberation Sans" font-size="11" text-anchor="middle" fill="#000" stroke="none">P</text>
 <use href="#tri" x="121" y="194"/>
 <!-- row6 -->
 <circle cx="83.5" cy="209.5" r="8" stroke-width="1.1"/>
 <text x="84" y="214" font-family="Liberation Sans" font-size="11" text-anchor="middle" fill="#000" stroke="none">D</text>
 <use href="#tri" x="94" y="218"/>
 <text x="103" y="212" font-family="Liberation Sans" font-size="11" fill="#000" stroke="none">R</text>
 <path d="M117.5 202 Q116.5 214 103.5 216.5" stroke-dasharray="1.6 0.5"/>
 <use href="#tri" x="121" y="218"/>
 <!-- row7 -->
 <path d="M75.5 234 L81 227.5 H92.5 L85.5 234.5 L92 241.5 H75.5z" stroke-width="1.1"/>
 <use href="#tri" x="94" y="242"/>
 <path d="M106.5 239.5 Q108.5 237.5 108 236 A3.8 3.8 0 1 1 113 236 Q112.5 237.5 114.5 239.5 L116 240" stroke-dasharray="1.3 0.6"/>
 <use href="#tri" x="121" y="242"/>
 <!-- row8 -->
 <path d="M75 263.5 L90 251.5 M77.5 265.5 L92 254"/>
 <use href="#tri" x="94" y="266"/>
 <path d="M112 250.5 L114.5 256 L120.5 256.5 L116 260.5 L117.5 266 L112 263 L106.5 266 L108 260.5 L103.5 256.5 L109.5 256z" stroke-dasharray="1.2 0.6"/>
 <circle cx="105" cy="258" r="1.5" fill="#000"/><circle cx="119" cy="258" r="1.5" fill="#000"/>
 <use href="#tri" x="121" y="266"/>
 <!-- row9 -->
 <circle cx="83.5" cy="281.5" r="5" stroke-width="2"/>
 <path d="M83.5 273 V290 M75 281.5 H92" stroke-width="1.3"/>
 <use href="#tri" x="94" y="290"/>
 <path d="M104 289.5 L114 279.5 L116.5 282 L106.5 292z" stroke-width="1" fill="#fff"/>
 <path d="M113 277.5 L118.5 283" stroke-width="2"/>
 <circle cx="117.5" cy="277.5" r="2.6" fill="#000" stroke="none"/>
 <!-- row10 -->
 <circle cx="84" cy="302.5" r="5.5" stroke-width="1.2"/>
 <path d="M84.5 299 A3 3 0 1 0 85 306" stroke-width="1.3"/>
 <path d="M81.5 307.5 L84 310.5 L86.5 307.5" stroke-width="1.2"/>
 <path d="M81.5 316 V312.5 H86.5 V316" stroke-width="1.5"/>
 <text x="111" y="310.5" font-family="Liberation Sans" font-weight="bold" font-size="12.5" text-anchor="middle" fill="#000" stroke="none">1:1</text>

 <!-- palette 2 -->
 <path d="M76.5 372 V385 M93.5 372 V385 M77 378.5 H93" stroke-width="1.2"/>
 <path d="M77 378.5 L80.5 376 V381z M93 378.5 L89.5 376 V381z" fill="#000" stroke="none"/>
 <path d="M105 371.5 H119 M105 385.5 H119 M112 372 V385" stroke-width="1.2"/>
 <path d="M112 372 L109.5 375.5 H114.5z M112 385 L109.5 381.5 H114.5z" fill="#000" stroke="none"/>
 <path d="M76 404 L82.5 410.5 M86.5 393.5 L93 400 M79 407.5 L89.5 397" stroke-width="1.1"/>
 <path d="M79 407.5 L80 403.5 L83 406.5z M89.5 397 L85.5 398 L88.5 401z" fill="#000" stroke="none"/>
 <path d="M103 404.5 L110 411 M113 393.5 L120 400 M106.5 407.5 L116.5 397 M108 406 L109.5 404.5 L111.5 406.5" stroke-width="1.1"/>
 <path d="M116.5 397 L112.5 398 L115.5 401z" fill="#000" stroke="none"/>
 <circle cx="83" cy="426" r="7" stroke-width="1.1"/>
 <path d="M78.5 421.5 L88 431" stroke-width="1.1"/>
 <path d="M78.5 421.5 L79 425 L82 422z M88 431 L84.5 430.5 L87.5 427.5z" fill="#000" stroke="none"/>
 <path d="M90 432 L92.5 434.5 M92.5 432 L90 434.5" stroke-width="0.8"/>
 <circle cx="110" cy="426" r="7" stroke-width="1.1"/>
 <path d="M110 426 L115 431" stroke-width="1.1"/>
 <path d="M115.5 431.5 L112 431 L115 428z" fill="#000" stroke="none"/>
 <path d="M117 432 L119.5 434.5 M119.5 432 L117 434.5" stroke-width="0.8"/>
 <circle cx="84.5" cy="450.5" r="5" stroke-width="1.2"/>
 <path d="M84.5 442 V459 M76 450.5 H93" stroke-width="1.2"/>
 <circle cx="84.5" cy="450.5" r="1" fill="#000" stroke="none"/>
 <path d="M103.5 457.5 H121 M103.5 457.5 L118.5 444" stroke-width="1.2"/>
 <path d="M115.5 449 Q117.5 452 117.5 456" stroke-dasharray="1 0.8"/>
 <path d="M114 447 L113 450.5 L116.5 449z" fill="#000" stroke="none"/>
 <path d="M118.5 452.5 L120.5 454.5 M120.5 452.5 L118.5 454.5" stroke-width="0.8"/>
</svg>

<!-- app window -->
<div class="a" style="left:141px;top:48px;width:726px;height:61px;background:#000"></div>
<div class="a" style="left:538px;top:80px;width:86px;height:29px;background:#f9f9f9"></div>
<div class="a" style="left:141px;top:109px;width:726px;height:110px;background:#f9f9f9"></div>
<div class="a" style="left:141px;top:219px;width:726px;height:1px;background:#000"></div>
<div class="a" style="left:141px;top:220px;width:726px;height:16px;background:#fff"></div>
<div class="a" style="left:141px;top:236px;width:726px;height:1px;background:#000"></div>
<div class="a" style="left:141px;top:237px;width:17px;height:594px;background:#fff"></div>
<div class="a" style="left:158px;top:220px;width:1px;height:611px;background:#000"></div>
<div class="a" style="left:159px;top:237px;width:708px;height:594px;background:#e3e3e3"></div>


<!-- page grid -->
<svg class="a" style="left:401px;top:288px" width="466" height="543" viewBox="0 0 466 543">
 <defs>
  <pattern id="minor" x="0" y="0" width="18" height="18" patternUnits="userSpaceOnUse"><rect x="0" y="0" width="1" height="1" fill="#000"/></pattern>
  <pattern id="majv" x="0" y="0" width="72" height="6" patternUnits="userSpaceOnUse"><rect x="0" y="0" width="1" height="1" fill="#000"/></pattern>
  <pattern id="majh" x="0" y="0" width="6" height="72" patternUnits="userSpaceOnUse"><rect x="0" y="0" width="1" height="1" fill="#000"/></pattern>
 </defs>
 <rect x="0" y="0" width="466" height="543" fill="#fff"/>
 <rect x="18" y="18" width="448" height="525" fill="url(#minor)"/>
 <rect x="72" y="6" width="394" height="537" fill="url(#majv)"/>
 <rect x="6" y="72" width="460" height="471" fill="url(#majh)"/>
 <path d="M0 0.5H466M0.5 0V543" stroke="#000" stroke-width="1" stroke-dasharray="1 1"/>
</svg>

<!-- rulers -->
<svg class="a" style="left:0;top:0" width="867" height="831" viewBox="0 0 867 831">
 <path d="M401.5 233v3M410.5 234v2M419.5 232v4M428.5 234v2M437.5 228v8M446.5 234v2M455.5 232v4M464.5 234v2M473.5 233v3M482.5 234v2M491.5 232v4M500.5 234v2M509.5 228v8M518.5 234v2M527.5 232v4M536.5 234v2M545.5 233v3M554.5 234v2M563.5 232v4M572.5 234v2M581.5 228v8M590.5 234v2M599.5 232v4M608.5 234v2M617.5 233v3M626.5 234v2M635.5 232v4M644.5 234v2M653.5 228v8M662.5 234v2M671.5 232v4M680.5 234v2M689.5 233v3M698.5 234v2M707.5 232v4M716.5 234v2M725.5 228v8M734.5 234v2M743.5 232v4M752.5 234v2M761.5 233v3M770.5 234v2M779.5 232v4M788.5 234v2M797.5 228v8M806.5 234v2M815.5 232v4M824.5 234v2M833.5 233v3M842.5 234v2M851.5 232v4M860.5 234v2" stroke="#000" stroke-width="1"/>
 <text x="395.5" y="230.2" font-size="9.6" stroke="#111" stroke-width="0.15" font-family="Liberation Sans" fill="#111">0</text><rect x="403" y="223.3" width="1.2" height="2.6" fill="#222"/><rect x="406" y="223.3" width="1.2" height="2.6" fill="#222"/><text x="467.5" y="230.2" font-size="9.6" stroke="#111" stroke-width="0.15" font-family="Liberation Sans" fill="#111">1</text><rect x="475" y="223.3" width="1.2" height="2.6" fill="#222"/><rect x="478" y="223.3" width="1.2" height="2.6" fill="#222"/><text x="539.5" y="230.2" font-size="9.6" stroke="#111" stroke-width="0.15" font-family="Liberation Sans" fill="#111">2</text><rect x="547" y="223.3" width="1.2" height="2.6" fill="#222"/><rect x="550" y="223.3" width="1.2" height="2.6" fill="#222"/><text x="611.5" y="230.2" font-size="9.6" stroke="#111" stroke-width="0.15" font-family="Liberation Sans" fill="#111">3</text><rect x="619" y="223.3" width="1.2" height="2.6" fill="#222"/><rect x="622" y="223.3" width="1.2" height="2.6" fill="#222"/><text x="683.5" y="230.2" font-size="9.6" stroke="#111" stroke-width="0.15" font-family="Liberation Sans" fill="#111">4</text><rect x="691" y="223.3" width="1.2" height="2.6" fill="#222"/><rect x="694" y="223.3" width="1.2" height="2.6" fill="#222"/><text x="755.5" y="230.2" font-size="9.6" stroke="#111" stroke-width="0.15" font-family="Liberation Sans" fill="#111">5</text><rect x="763" y="223.3" width="1.2" height="2.6" fill="#222"/><rect x="766" y="223.3" width="1.2" height="2.6" fill="#222"/><text x="827.5" y="230.2" font-size="9.6" stroke="#111" stroke-width="0.15" font-family="Liberation Sans" fill="#111">6</text><rect x="835" y="223.3" width="1.2" height="2.6" fill="#222"/><rect x="838" y="223.3" width="1.2" height="2.6" fill="#222"/>
 <path d="M142 288.5h16M156 297.5h2M154 306.5h4M156 315.5h2M150 324.5h8M156 333.5h2M154 342.5h4M156 351.5h2M142 360.5h16M156 369.5h2M154 378.5h4M156 387.5h2M150 396.5h8M156 405.5h2M154 414.5h4M156 423.5h2M142 432.5h16M156 441.5h2M154 450.5h4M156 459.5h2M150 468.5h8M156 477.5h2M154 486.5h4M156 495.5h2M142 504.5h16M156 513.5h2M154 522.5h4M156 531.5h2M150 540.5h8M156 549.5h2M154 558.5h4M156 567.5h2M142 576.5h16M156 585.5h2M154 594.5h4M156 603.5h2M150 612.5h8M156 621.5h2M154 630.5h4M156 639.5h2M142 648.5h16M156 657.5h2M154 666.5h4M156 675.5h2M150 684.5h8M156 693.5h2M154 702.5h4M156 711.5h2M142 720.5h16M156 729.5h2M154 738.5h4M156 747.5h2M150 756.5h8M156 765.5h2M154 774.5h4M156 783.5h2M142 792.5h16M156 801.5h2M154 810.5h4M156 819.5h2M150 828.5h8" stroke="#000" stroke-width="1"/>
 <rect x="141" y="219" width="1" height="612" fill="#000"/>
 <text transform="translate(152.3,295) rotate(-90)" font-size="10" font-family="Liberation Sans" fill="#111">0</text><rect x="145" y="284" width="3" height="1.2" fill="#222"/><rect x="145" y="286" width="3" height="1.2" fill="#222"/><text transform="translate(152.3,367) rotate(-90)" font-size="10" font-family="Liberation Sans" fill="#111">1</text><rect x="145" y="356" width="3" height="1.2" fill="#222"/><rect x="145" y="358" width="3" height="1.2" fill="#222"/><text transform="translate(152.3,439) rotate(-90)" font-size="10" font-family="Liberation Sans" fill="#111">2</text><rect x="145" y="428" width="3" height="1.2" fill="#222"/><rect x="145" y="430" width="3" height="1.2" fill="#222"/><text transform="translate(152.3,511) rotate(-90)" font-size="10" font-family="Liberation Sans" fill="#111">3</text><rect x="145" y="500" width="3" height="1.2" fill="#222"/><rect x="145" y="502" width="3" height="1.2" fill="#222"/><text transform="translate(152.3,583) rotate(-90)" font-size="10" font-family="Liberation Sans" fill="#111">4</text><rect x="145" y="572" width="3" height="1.2" fill="#222"/><rect x="145" y="574" width="3" height="1.2" fill="#222"/><text transform="translate(152.3,655) rotate(-90)" font-size="10" font-family="Liberation Sans" fill="#111">5</text><rect x="145" y="644" width="3" height="1.2" fill="#222"/><rect x="145" y="646" width="3" height="1.2" fill="#222"/><text transform="translate(152.3,727) rotate(-90)" font-size="10" font-family="Liberation Sans" fill="#111">6</text><rect x="145" y="716" width="3" height="1.2" fill="#222"/><rect x="145" y="718" width="3" height="1.2" fill="#222"/><text transform="translate(152.3,799) rotate(-90)" font-size="10" font-family="Liberation Sans" fill="#111">7</text><rect x="145" y="788" width="3" height="1.2" fill="#222"/><rect x="145" y="790" width="3" height="1.2" fill="#222"/>
</svg>


<!-- menu -->
<div class="a menu" style="left:166px">File</div>
<div class="a menu" style="left:232px">Edit</div>
<div class="a menu" style="left:303px">Text</div>
<div class="a menu" style="left:374px">Options</div>
<div class="a menu" style="left:467px">Arrange</div>
<div class="a menu" style="left:562px;color:#222">Layout</div>
<div class="a menu" style="left:648px">View</div>
<div class="a menu" style="left:724px">Window</div>
<div class="a menu" style="left:819px">Properties</div>


<!-- title icons -->
<svg class="a" style="left:141px;top:48px" width="160" height="32" viewBox="0 0 160 32">
 <defs><radialGradient id="lg" cx="0.45" cy="0.35" r="0.7"><stop offset="0" stop-color="#f6b23a"/><stop offset="1" stop-color="#d8861a"/></radialGradient></defs>
 <circle cx="16" cy="16" r="11.3" fill="url(#lg)" stroke="#e8e4dc" stroke-width="1.6"/>
 <path d="M13.2 17 L10.2 25.5 M18.8 17 L21.2 23.5" stroke="#eee" stroke-width="2"/>
 <path d="M12.5 10 H19 V16 L17 17.8 H14.5 L12.5 16z" fill="#2a2e3a"/><rect x="15" y="6.2" width="2.2" height="4" fill="#2a2e3a"/>
 <circle cx="15.8" cy="13.8" r="1.5" fill="#f5c000"/>
 <circle cx="9" cy="20.5" r="2.2" fill="#e06060"/><circle cx="10.8" cy="23.8" r="1.4" fill="#f5d020"/>
 <rect x="41" y="8" width="2" height="15" fill="#555"/>
 <path d="M54 8 h15 v14.8 h-15z" fill="#5e5668"/>
 <rect x="60" y="8.5" width="6.5" height="5.7" fill="#fff"/><rect x="62.8" y="9.6" width="1.8" height="3.4" fill="#111"/>
 <rect x="57" y="17" width="9.3" height="1.7" fill="#6cc838"/><rect x="57" y="18.7" width="9.3" height="3.6" fill="#fff"/>
 <path d="M80.5 14.5 l8 -6.5 v4 c6 0 11 4 11.5 12 c-2 -4.5 -6.5 -6.5 -11.5 -6 v3z" fill="#fff"/>
 <path d="M127.5 14.5 l-8 -6.5 v4 c-6 0 -11 4 -11.5 12 c2 -4.5 6.5 -6.5 11.5 -6 v3z" fill="#fff"/>
 <rect x="140" y="8" width="2" height="15" fill="#555"/>
</svg>

<!-- ribbon highlight boxes -->
<div class="a" style="left:369px;top:124px;width:146px;height:76px;background:#c2c2c2"></div>
<div class="a" style="left:592px;top:124px;width:51px;height:76px;background:#c2c2c2"></div>
<div class="a sep" style="left:359px;top:126px;height:78px"></div>
<div class="a sep" style="left:582px;top:126px;height:78px"></div>
<div class="a sep" style="left:653px;top:126px;height:78px"></div>
<div class="a sep" style="left:818px;top:126px;height:78px"></div>

<!-- ribbon labels -->
<div class="a rb" style="left:187px;top:164px;transform:translateX(-50%)">Set Scale &amp;<br>Units</div>
<div class="a rb" style="left:226px;top:164px">Set Grid <i style="display:inline-block;width:0;height:0;border-left:3.5px solid transparent;border-right:3.5px solid transparent;border-top:5px solid #222;vertical-align:2px;margin-left:2px"></i></div>
<div class="a rb" style="left:317px;top:164px;transform:translateX(-50%)">Set Angle<br>Snap <i style="display:inline-block;width:0;height:0;border-left:3.5px solid transparent;border-right:3.5px solid transparent;border-top:5px solid #222;vertical-align:2px;margin-left:2px"></i></div>
<div class="a rb" style="left:404px;top:164px;transform:translateX(-50%)">Hide/Show<br>Rulers</div>
<div class="a rb" style="left:476px;top:164px;transform:translateX(-50%)">Scale Rulers</div>
<div class="a rb" style="left:543px;top:164px;transform:translateX(-50%)">Standard<br>Rulers</div>
<div class="a rb" style="left:617px;top:164px;transform:translateX(-50%)">Snap to<br>Object</div>
<div class="a rb" style="left:697px;top:164px;transform:translateX(-50%)">Hide/Show<br>Grid Lines</div>
<div class="a rb" style="left:769px;top:164px;transform:translateX(-50%)">Hide/Show<br>Page Breaks</div>
<div class="a rb" style="left:832px;top:164px;text-align:left">Drawing<br><span style="padding-left:11px">Size</span></div>

<!-- ribbon icons -->
<svg class="a" style="left:141px;top:109px" width="726" height="60" viewBox="141 109 726 60">
 <defs>
  <g id="rul">
   <rect x="0.5" y="0.5" width="31" height="6" fill="#fcd03a" stroke="#c9a020"/>
   <rect x="0.5" y="0.5" width="6" height="31" fill="#fcd03a" stroke="#c9a020"/>
   <path d="M9 6v-3.5M12 6v-2.5M15 6v-3.5M18 6v-2.5M21 6v-3.5M24 6v-2.5M27 6v-3.5M6 9h-4.5M6 12h-3M6 15h-4.5M6 18h-3M6 21h-4.5M6 24h-3M6 27h-4.5" stroke="#a88010" stroke-width="1"/>
  </g>
  <g id="rul2">
   <rect x="0.5" y="0.5" width="31" height="7.5" fill="#fdd23a" stroke="#c49a18"/>
   <rect x="0.5" y="0.5" width="7.5" height="31" fill="#fdd23a" stroke="#c49a18"/>
   <path d="M0.5 8H8V0.5" stroke="#c49a18" fill="none"/>
   <path d="M10.5 8v-5M13.5 8v-4M16.5 8v-5M19.5 8v-4M22.5 8v-5M25.5 8v-4M28.5 8v-5M8 10.5h-6.5M8 13.5h-5M8 16.5h-6.5M8 19.5h-5M8 22.5h-6.5M8 25.5h-5M8 28.5h-6.5" stroke="#b08818" stroke-width="1"/>
  </g>
  <g id="rulbox">
   <rect x="7.5" y="7.5" width="24" height="24" fill="#fff" stroke="#9a9a9a"/>
   <use href="#rul2"/>
  </g>
  <g id="mag">
   <path d="M-6 6 v-6 a6 6 0 0 1 12 0 v6 h-3.6 v-6 a2.4 2.4 0 0 0 -4.8 0 v6z" fill="#2a95e0"/>
   <path d="M0 -6 a6 6 0 0 1 6 6 v6 h-3.6 v-6 a2.4 2.4 0 0 0 -2.4 -2.4z" fill="#ee4a35"/>
  </g>
 </defs>
 <!-- set scale -->
 <g transform="translate(172,129)">
  <use href="#rul"/>
  <circle cx="17.6" cy="17.4" r="6.9" fill="#ececec" stroke="#2e2e2e" stroke-width="1.7"/>
  <text x="17.6" y="20.2" font-size="7.5" font-weight="bold" text-anchor="middle" fill="#222" font-family="Liberation Sans">1:1</text>
  <path d="M23.8 23.6 L30.5 30.3" stroke="#2e2e2e" stroke-width="3.4"/>
 </g>
 <!-- set grid -->
 <g transform="translate(239,129)">
  <rect x="0.5" y="0.5" width="31" height="31" fill="#fff" stroke="#8a8a8a"/>
  <path d="M11.5 3v28M20.5 3v28M3 11.5h28M3 20.5h28" stroke="#444" stroke-width="1" stroke-dasharray="1 2"/>
  <g transform="translate(16,15.5)"><use href="#mag"/></g>
 </g>
 <!-- set angle snap -->
 <g transform="translate(302,129)">
  <rect x="0.5" y="0.5" width="31" height="31" fill="#fff" stroke="#8a8a8a"/>
  <path d="M5.5 25.5 L24.5 6.5 M5 25.5 H27 M17.5 16.5 Q21 19.5 21 25.5" stroke="#1a1a1a" stroke-width="1.2" fill="none"/>
  <g transform="translate(11,11)"><use href="#mag"/></g>
 </g>
 <!-- hide show rulers -->
 <g transform="translate(388,129)">
  <use href="#rulbox"/>
  <path d="M10 19 Q20 8.5 30 19 Q20 29.5 10 19z" fill="#86cc48" stroke="#4f8e24" stroke-width="1.2"/>
  <circle cx="20" cy="19" r="3.6" fill="#fff" stroke="#4f8e24" stroke-width="1"/><circle cx="20" cy="19" r="1.1" fill="#111"/>
 </g>
 <!-- scale rulers -->
 <g transform="translate(460,129)">
  <use href="#rulbox"/>
  <text x="19.3" y="24.2" font-size="14" font-weight="bold" text-anchor="middle" fill="#1a1a1a" font-family="Liberation Sans" textLength="14" lengthAdjust="spacingAndGlyphs">1:1</text>
 </g>
 <!-- standard rulers -->
 <g transform="translate(527,129)">
  <use href="#rulbox"/>
  <text x="19.5" y="24.5" font-size="21" font-style="italic" text-anchor="middle" fill="#1a1a1a" font-family="Liberation Serif">x</text>
 </g>
 <!-- snap to object -->
 <g transform="translate(601,129)">
  <rect x="0.5" y="0.5" width="31" height="31" fill="#fff" stroke="#8a8a8a"/>
  <path d="M3 7.5H31M7.5 3V31" stroke="#8a8a8a" stroke-width="1"/>
  <rect x="5.8" y="5.8" width="3.4" height="3.4" fill="#333"/>
  <path d="M10 9 L18 16.5 L13.5 16.8 L10.3 20z" fill="#000"/>
  <g transform="translate(23,22.5) scale(0.96,1.08)"><use href="#mag"/></g>
 </g>
 <!-- grid lines -->
 <g transform="translate(681,129)">
  <rect x="0.5" y="0.5" width="31" height="31" fill="#fff" stroke="#8a8a8a"/>
  <path d="M11.5 3v28M20.5 3v28M3 11.5h28M3 20.5h28" stroke="#444" stroke-width="1" stroke-dasharray="1 2"/>
 </g>
 <!-- page breaks -->
 <g transform="translate(756,129)">
  <g stroke="#8a8a8a" fill="#fff"><rect x="0.5" y="0.5" width="11" height="14"/><rect x="14.5" y="0.5" width="11" height="14"/>
  <rect x="0.5" y="17.5" width="11" height="14"/><rect x="14.5" y="17.5" width="11" height="14"/></g>
  <path d="M4 3.5h6M4 5.5h6M4 7.5h6M4 9.5h6M4 11.5h4M18 3.5h6M18 5.5h6M18 7.5h6M18 9.5h6M18 11.5h4M4 20.5h6M4 22.5h6M4 24.5h6M4 26.5h6M4 28.5h4M18 20.5h6M18 22.5h6M18 24.5h6M18 26.5h6M18 28.5h4" stroke="#c4c4c4" stroke-width="1" fill="none"/>
 </g>
 <!-- drawing size -->
 <g transform="translate(839,129)">
  <use href="#rulbox"/>
  <path d="M10 10 L28 28" stroke="#333" stroke-width="1.2"/>
  <path d="M9 9 l6 1 l-5 5z M29 29 l-6 -1 l5 -5z" fill="#333"/>
 </g>
</svg>

<!-- small palette -->
<div class="a" style="left:170px;top:244px;width:191px;height:64px;box-shadow:0 2px 16px 2px rgba(0,0,0,0.26)"></div>
<div class="a" style="left:170px;top:320px;width:320px;height:450px;box-shadow:0 2px 16px 2px rgba(0,0,0,0.26)"></div>
<div class="a hd" style="left:170px;top:244px;width:191px;height:31px"><div class="x" style="left:166px;top:14px"></div></div>
<div class="a pal" style="left:170px;top:275px;width:191px;height:33px"></div>

<!-- library -->
<div class="a hd" style="left:170px;top:320px;width:320px;height:32px"><div class="x" style="left:295px;top:14px"></div>
<div class="a" style="left:140px;top:8px;color:#fff;font-size:13px">Library</div></div>
<div class="a pal" style="left:170px;top:352px;width:320px;height:418px;border:1px solid #000;border-top:0"></div>


<!-- library content -->
<div class="a" style="left:179px;top:360px;width:302px;height:123px;background:#fff;border:1px solid #a9a9a9;border-right-color:#f0f0f0;border-bottom-color:#f0f0f0"></div>
<div class="a" style="left:463px;top:361px;width:17px;height:121px;background:#f0f0f0"></div>
<div class="a" style="left:464px;top:379px;width:14px;height:65px;background:#cdcdcd"></div>
<svg class="a" style="left:463px;top:361px" width="17" height="121" viewBox="0 0 17 121">
 <path d="M4 13 L8 9 L12 13" stroke="#5a5a5a" stroke-width="2" fill="none"/>
 <path d="M4 110 L8 114 L12 110" stroke="#5a5a5a" stroke-width="2" fill="none"/>
</svg>
<div class="a" style="left:180px;top:361px;width:283px;height:121px;overflow:hidden">
 <svg class="a" style="left:0;top:0" width="283" height="121" viewBox="180 361 283 121">
  <defs>
   <g id="fold"><path d="M0.5 1.5 h3 l1 -1 h5 v13 h-9z" fill="#f8d675"/><path d="M0.5 3.5 h9 v10 h-9z" fill="#ffe59a"/><path d="M0.5 13.5 v-12" stroke="#d9a42a" stroke-width="1"/><path d="M5 3.5 v10" stroke="#e8b940" stroke-width="1.2"/></g>
  </defs>
  <path d="M187.5 368.5 l4 4 l4 -4" stroke="#333" stroke-width="1.5" fill="none"/>
  <use href="#fold" x="205" y="364.5"/>
  <g stroke="#9a9a9a" stroke-width="1.5" fill="none">
   <path d="M208.5 385 l4 4 l-4 4"/><path d="M208.5 403 l4 4 l-4 4"/><path d="M208.5 421 l4 4 l-4 4"/>
   <path d="M208.5 439 l4 4 l-4 4"/><path d="M208.5 457 l4 4 l-4 4"/><path d="M208.5 475 l4 4 l-4 4"/>
  </g>
  <use href="#fold" x="224" y="382.5"/><use href="#fold" x="224" y="400.5"/><use href="#fold" x="224" y="418.5"/>
  <use href="#fold" x="224" y="436.5"/><use href="#fold" x="224" y="454.5"/><use href="#fold" x="224" y="472.5"/>
 </svg>
 <div class="a tr" style="left:44px;top:3px">Microspot Library</div>
 <div class="a tr" style="left:63px;top:21px">Electronic Symbol Libraries</div>
 <div class="a tr" style="left:63px;top:39px">Engineering Symbol Libraries</div>
 <div class="a tr" style="left:63px;top:57px">Garden Plan Graphics</div>
 <div class="a tr" style="left:63px;top:75px">Home Plan Graphics</div>
 <div class="a tr" style="left:63px;top:93px">Safety Signs</div>
 <div class="a tr" style="left:63px;top:111px">Symbol Libraries</div>
</div>

<div class="a" style="left:179px;top:487px;width:302px;height:201px;background:#fff;border:1px solid #a9a9a9;border-right-color:#f0f0f0;border-bottom-color:#f0f0f0"></div>
<div class="a" style="left:463px;top:488px;width:17px;height:199px;background:#f0f0f0"></div>
<div class="a" style="left:464px;top:508px;width:14px;height:17px;background:#cdcdcd"></div>
<svg class="a" style="left:463px;top:488px" width="17" height="199" viewBox="0 0 17 199">
 <path d="M4 13 L8 9 L12 13" stroke="#5a5a5a" stroke-width="2" fill="none"/>
 <path d="M4 188 L8 192 L12 188" stroke="#5a5a5a" stroke-width="2" fill="none"/>
</svg>
<div class="a" style="left:180px;top:488px;width:283px;height:199px;overflow:hidden">
 <svg class="a" style="left:0;top:0" width="283" height="199" viewBox="180 488 283 199">
  <defs>
   <g id="sofa">
    <rect x="0" y="3" width="10" height="36" rx="2" class="sa"/>
    <rect x="39" y="3" width="10" height="36" rx="2" class="sa"/>
    <path d="M2 4 Q3 0 24.5 0 Q46 0 47 4 L46 9 Q24.5 16 3 9z" class="sb"/>
    <path d="M9 10 Q24.5 4 40 10 V40 Q40 42 37 42 H12 Q9 42 9 40z" class="sc"/>
   </g>
  </defs>
  <rect x="194.5" y="489.5" width="69" height="30" fill="#fff" stroke="#808080"/><path d="M225.5 489 v31" stroke="#808080"/><path d="M194 489.5 h70" stroke="#2a6060"/>
  <rect x="287.5" y="489.5" width="69" height="30" fill="#fff" stroke="#808080"/><path d="M318.5 489 v31" stroke="#808080"/><path d="M287 489.5 h70" stroke="#b06a30"/>
  <g transform="translate(389.5,477)">
   <rect x="0.5" y="4" width="7.5" height="32.5" rx="2.5" fill="#c7b19e" stroke="#6a5a4c"/>
   <rect x="41" y="4" width="7.5" height="32.5" rx="2.5" fill="#c7b19e" stroke="#6a5a4c"/>
   <rect x="1" y="0.5" width="47" height="5.5" rx="2.5" fill="#c7b19e" stroke="#6a5a4c"/>
   <path d="M7 6 Q7 2.5 24.5 2.5 Q42 2.5 42 6 V38.5 Q42 41.5 39 41.5 H10 Q7 41.5 7 38.5z" fill="#c7b19e" stroke="#6a5a4c"/>
   <path d="M8 7 Q24.5 2.5 41 7 V10 Q24.5 15 8 10z" fill="#dccbbb" opacity="0.6"/>
   <path d="M9 13v26" stroke="#6a5a4c" stroke-opacity="0.25" stroke-width="1"/><path d="M13 13v26" stroke="#6a5a4c" stroke-opacity="0.25" stroke-width="1"/><path d="M17 13v26" stroke="#6a5a4c" stroke-opacity="0.25" stroke-width="1"/><path d="M21 13v26" stroke="#6a5a4c" stroke-opacity="0.25" stroke-width="1"/><path d="M25 13v26" stroke="#6a5a4c" stroke-opacity="0.25" stroke-width="1"/><path d="M29 13v26" stroke="#6a5a4c" stroke-opacity="0.25" stroke-width="1"/><path d="M33 13v26" stroke="#6a5a4c" stroke-opacity="0.25" stroke-width="1"/><path d="M37 13v26" stroke="#6a5a4c" stroke-opacity="0.25" stroke-width="1"/>
  </g><g transform="translate(203.5,541)">
   <rect x="0.5" y="4" width="7.5" height="32.5" rx="2.5" fill="#1f1f1f" stroke="#000"/>
   <rect x="41" y="4" width="7.5" height="32.5" rx="2.5" fill="#1f1f1f" stroke="#000"/>
   <rect x="1" y="0.5" width="47" height="5.5" rx="2.5" fill="#1f1f1f" stroke="#000"/>
   <path d="M7 6 Q7 2.5 24.5 2.5 Q42 2.5 42 6 V38.5 Q42 41.5 39 41.5 H10 Q7 41.5 7 38.5z" fill="#1f1f1f" stroke="#000"/>
   <path d="M8 7 Q24.5 2.5 41 7 V10 Q24.5 15 8 10z" fill="#2e2e2e" opacity="0.6"/>
   <path d="M9 13v26" stroke="#000" stroke-opacity="0.25" stroke-width="1"/><path d="M13 13v26" stroke="#000" stroke-opacity="0.25" stroke-width="1"/><path d="M17 13v26" stroke="#000" stroke-opacity="0.25" stroke-width="1"/><path d="M21 13v26" stroke="#000" stroke-opacity="0.25" stroke-width="1"/><path d="M25 13v26" stroke="#000" stroke-opacity="0.25" stroke-width="1"/><path d="M29 13v26" stroke="#000" stroke-opacity="0.25" stroke-width="1"/><path d="M33 13v26" stroke="#000" stroke-opacity="0.25" stroke-width="1"/><path d="M37 13v26" stroke="#000" stroke-opacity="0.25" stroke-width="1"/>
  </g><g transform="translate(296.5,541)">
   <rect x="0.5" y="4" width="7.5" height="32.5" rx="2.5" fill="#1c4d8c" stroke="#0a2040"/>
   <rect x="41" y="4" width="7.5" height="32.5" rx="2.5" fill="#1c4d8c" stroke="#0a2040"/>
   <rect x="1" y="0.5" width="47" height="5.5" rx="2.5" fill="#1c4d8c" stroke="#0a2040"/>
   <path d="M7 6 Q7 2.5 24.5 2.5 Q42 2.5 42 6 V38.5 Q42 41.5 39 41.5 H10 Q7 41.5 7 38.5z" fill="#1c4d8c" stroke="#0a2040"/>
   <path d="M8 7 Q24.5 2.5 41 7 V10 Q24.5 15 8 10z" fill="#2a62a8" opacity="0.6"/>
   <path d="M9 13v26" stroke="#0a2040" stroke-opacity="0.25" stroke-width="1"/><path d="M13 13v26" stroke="#0a2040" stroke-opacity="0.25" stroke-width="1"/><path d="M17 13v26" stroke="#0a2040" stroke-opacity="0.25" stroke-width="1"/><path d="M21 13v26" stroke="#0a2040" stroke-opacity="0.25" stroke-width="1"/><path d="M25 13v26" stroke="#0a2040" stroke-opacity="0.25" stroke-width="1"/><path d="M29 13v26" stroke="#0a2040" stroke-opacity="0.25" stroke-width="1"/><path d="M33 13v26" stroke="#0a2040" stroke-opacity="0.25" stroke-width="1"/><path d="M37 13v26" stroke="#0a2040" stroke-opacity="0.25" stroke-width="1"/>
  </g><g transform="translate(389.5,541)">
   <rect x="0.5" y="4" width="7.5" height="32.5" rx="2.5" fill="#d8d4bf" stroke="#6a6658"/>
   <rect x="41" y="4" width="7.5" height="32.5" rx="2.5" fill="#d8d4bf" stroke="#6a6658"/>
   <rect x="1" y="0.5" width="47" height="5.5" rx="2.5" fill="#d8d4bf" stroke="#6a6658"/>
   <path d="M7 6 Q7 2.5 24.5 2.5 Q42 2.5 42 6 V38.5 Q42 41.5 39 41.5 H10 Q7 41.5 7 38.5z" fill="#d8d4bf" stroke="#6a6658"/>
   <path d="M8 7 Q24.5 2.5 41 7 V10 Q24.5 15 8 10z" fill="#ebe8d8" opacity="0.6"/>
   <path d="M9 13v26" stroke="#6a6658" stroke-opacity="0.25" stroke-width="1"/><path d="M13 13v26" stroke="#6a6658" stroke-opacity="0.25" stroke-width="1"/><path d="M17 13v26" stroke="#6a6658" stroke-opacity="0.25" stroke-width="1"/><path d="M21 13v26" stroke="#6a6658" stroke-opacity="0.25" stroke-width="1"/><path d="M25 13v26" stroke="#6a6658" stroke-opacity="0.25" stroke-width="1"/><path d="M29 13v26" stroke="#6a6658" stroke-opacity="0.25" stroke-width="1"/><path d="M33 13v26" stroke="#6a6658" stroke-opacity="0.25" stroke-width="1"/><path d="M37 13v26" stroke="#6a6658" stroke-opacity="0.25" stroke-width="1"/>
  </g><g transform="translate(203.5,604)">
   <rect x="0.5" y="4" width="7.5" height="32.5" rx="2.5" fill="#560a12" stroke="#200004"/>
   <rect x="41" y="4" width="7.5" height="32.5" rx="2.5" fill="#560a12" stroke="#200004"/>
   <rect x="1" y="0.5" width="47" height="5.5" rx="2.5" fill="#560a12" stroke="#200004"/>
   <path d="M7 6 Q7 2.5 24.5 2.5 Q42 2.5 42 6 V38.5 Q42 41.5 39 41.5 H10 Q7 41.5 7 38.5z" fill="#560a12" stroke="#200004"/>
   <path d="M8 7 Q24.5 2.5 41 7 V10 Q24.5 15 8 10z" fill="#6e1420" opacity="0.6"/>
   <path d="M9 13v26" stroke="#200004" stroke-opacity="0.25" stroke-width="1"/><path d="M13 13v26" stroke="#200004" stroke-opacity="0.25" stroke-width="1"/><path d="M17 13v26" stroke="#200004" stroke-opacity="0.25" stroke-width="1"/><path d="M21 13v26" stroke="#200004" stroke-opacity="0.25" stroke-width="1"/><path d="M25 13v26" stroke="#200004" stroke-opacity="0.25" stroke-width="1"/><path d="M29 13v26" stroke="#200004" stroke-opacity="0.25" stroke-width="1"/><path d="M33 13v26" stroke="#200004" stroke-opacity="0.25" stroke-width="1"/><path d="M37 13v26" stroke="#200004" stroke-opacity="0.25" stroke-width="1"/>
  </g>
  
  
  
  
  <rect x="318.5" y="606.5" width="5" height="35" fill="#fff" stroke="#b0b0b0"/>
  <rect x="412.5" y="606.5" width="4" height="19" fill="#fff" stroke="#b8b8b8"/><path d="M414.5 626 v16" stroke="#e8e8e8"/>
  <rect x="227.5" y="669.5" width="3" height="20" fill="#fff" stroke="#b8b8b8"/>
  <rect x="318.5" y="672.5" width="5" height="18" fill="#fff" stroke="#b8b8b8"/><rect x="318.5" y="668.5" width="5" height="2" fill="#ddd"/>
  <rect x="398.5" y="671.5" width="34" height="20" fill="#fff" stroke="#a0a0a0"/><rect x="401.5" y="674.5" width="28" height="20" fill="#fff" stroke="#c0c0c0"/>
 </svg>
 <div class="a it" style="left:6.5px;top:34px;width:85px">**Custom**&nbsp; S...</div>
 <div class="a it" style="left:99px;top:34px;width:85px">**Custom**...</div>
 <div class="a it" style="left:192px;top:34px;width:85px">1 Seat Sofa St...</div>
 <div class="a it" style="left:6px;top:97px;width:85px">1 Seat Sofa St...</div>
 <div class="a it" style="left:99px;top:97px;width:85px">1 Seat Sofa St...</div>
 <div class="a it" style="left:192px;top:97px;width:85px">1 Seat Sofa St...</div>
 <div class="a it" style="left:6px;top:160px;width:85px">1 Seat Sofa St...</div>
 <div class="a it" style="left:99px;top:160px;width:85px">1' 4, B</div>
 <div class="a it" style="left:192px;top:160px;width:85px">1' 4, C</div>
</div>

<!-- bottom bar -->
<svg class="a" style="left:170px;top:690px" width="320" height="80" viewBox="170 690 320 80">
 <rect x="187.5" y="709.5" width="8" height="6.5" fill="#fff" stroke="#222"/>
 <path d="M189 716 q2.5 -3 5 0z" fill="#222"/><circle cx="191.5" cy="711.8" r="1.3" fill="#222"/>
 <rect x="210.5" y="712.5" width="232" height="3" fill="#e6e6e6" stroke="#d6d6d6"/>
 <rect x="209.5" y="707" width="6.5" height="13" fill="#0078d7"/>
 <rect x="457.5" y="707.5" width="15" height="11" fill="#fff" stroke="#222"/>
 <path d="M459.5 718 q5.5 -6.5 11 0z" fill="#222"/><circle cx="465" cy="711.8" r="2.4" fill="#222"/>
 <rect x="188.5" y="733.5" width="43" height="19" fill="#ececec" stroke="#b4b4b4"/>
 <g transform="translate(204,742.5)" fill="#555">
  <circle r="3.4"/>
  <g stroke="#555" stroke-width="2"><path d="M0 -5.2V5.2M-5.2 0H5.2M-3.7 -3.7L3.7 3.7M-3.7 3.7L3.7 -3.7"/></g>
  <circle r="1.3" fill="#ececec"/>
 </g>
 <path d="M218.5 740.5 l3 3 l3 -3" stroke="#222" stroke-width="1.5" fill="none"/>
 <rect x="241.5" y="733.5" width="150" height="19" fill="#fff" stroke="#8a8a8a"/>
 <rect x="371" y="735" width="1.5" height="16" fill="#e6e6e6"/>
 <circle cx="382.8" cy="740.8" r="3.6" fill="none" stroke="#9a9a9a" stroke-width="1.3"/>
 <path d="M380.3 743.5 l-4 4" stroke="#9a9a9a" stroke-width="1.6"/>
 <g fill="#b4b4b4"><rect x="486" y="758" width="1" height="1"/><rect x="484" y="760" width="1" height="1"/><rect x="486" y="760" width="1" height="1"/><rect x="482" y="762" width="1" height="1"/><rect x="484" y="762" width="1" height="1"/><rect x="486" y="762" width="1" height="1"/><rect x="480" y="764" width="1" height="1"/><rect x="482" y="764" width="1" height="1"/><rect x="484" y="764" width="1" height="1"/><rect x="486" y="764" width="1" height="1"/><rect x="478" y="766" width="1" height="1"/><rect x="480" y="766" width="1" height="1"/><rect x="482" y="766" width="1" height="1"/><rect x="484" y="766" width="1" height="1"/><rect x="486" y="766" width="1" height="1"/></g>
</svg>
<div class="a" style="left:418px;top:735px;font-size:11px;color:#111;line-height:14px">6680 Items</div>

</body></html>
